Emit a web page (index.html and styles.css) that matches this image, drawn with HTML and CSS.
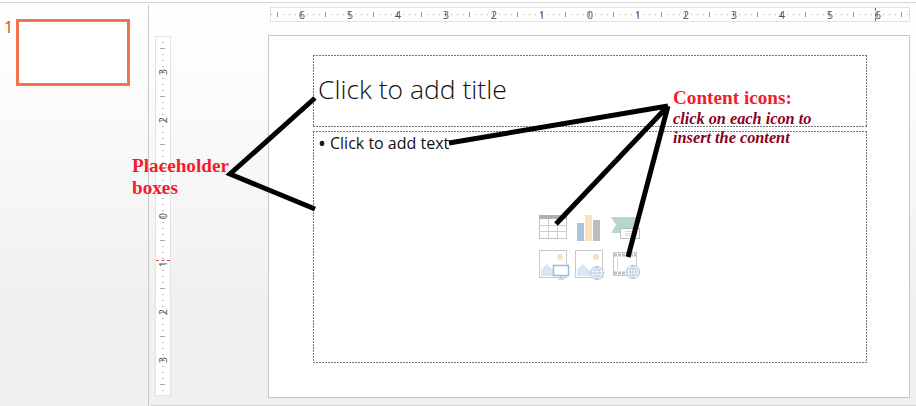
FILE: index.html
```html
<!DOCTYPE html>
<html lang="en">
<head>
    <meta charset="UTF-8">
    <title>Placeholder boxes</title>
    <link rel="stylesheet" href="styles.css">
</head>
<body>
    <div class="window">
        <div class="sidebar">
            <span class="slide-number">1</span>
            <div class="thumbnail"></div>
        </div>
        <div class="workspace">
            <div class="ruler-h">
                <span>6</span><span>5</span><span>4</span><span>3</span><span>2</span><span>1</span><span>0</span>
                <span>1</span><span>2</span><span>3</span><span>4</span><span>5</span><span>6</span>
                <i class="cursor-h"></i>
            </div>
            <div class="stage">
                <div class="ruler-v">
                    <span>3</span><span>2</span><span>1</span><span>0</span><span>1</span><span>2</span><span>3</span>
                    <i class="cursor-v"></i>
                </div>
                <div class="slide">
                    <div class="placeholder title-box">Click to add title</div>
                    <div class="placeholder content-box">
                        <p class="bullet"><span class="dot">&bull;</span>Click to add text</p>
                        <div class="icons">
                            <svg class="icon" viewBox="0 0 30 30">
                                <rect x="0.5" y="1.5" width="27" height="23" fill="#fff" stroke="#c4c4c4"/>
                                <rect x="0" y="1" width="28" height="4" fill="#b0b0b0"/>
                                <path d="M0 11.5H28M0 17.5H28M9.5 5V24M18.5 5V24" stroke="#cfcfcf" fill="none"/>
                            </svg>
                            <svg class="icon" viewBox="0 0 30 30">
                                <rect x="2" y="9" width="7" height="18" fill="#a9c2dd"/>
                                <rect x="10" y="1" width="7" height="26" fill="#f6e2bd"/>
                                <rect x="18" y="6" width="7" height="21" fill="#bdbdbd"/>
                            </svg>
                            <svg class="icon" viewBox="0 0 30 30">
                                <path d="M0 3H25L28 9L25 14H9V19H0L5 11Z" fill="#b9d6cc"/>
                                <rect x="9.5" y="14.5" width="19" height="10" fill="#fff" stroke="#bcbcbc"/>
                                <path d="M14 17.5H25M14 19.5H25M14 21.5H25" stroke="#d8d8d8" fill="none"/>
                            </svg>
                            <svg class="icon" viewBox="0 0 30 30">
                                <rect x="0.5" y="0.5" width="27" height="27" fill="#fff" stroke="#c8c8c8"/>
                                <circle cx="21" cy="7" r="3" fill="#f8dfc0"/>
                                <path d="M2 26V20L8 14L14 20V26Z" fill="#dbe4f2"/>
                                <rect x="14.5" y="15.5" width="15" height="10" fill="#fff" stroke="#9db9dc" stroke-width="1.5"/>
                                <path d="M22 26V28M19 29H25" stroke="#9db9dc" fill="none"/>
                            </svg>
                            <svg class="icon" viewBox="0 0 30 30">
                                <rect x="0.5" y="0.5" width="27" height="27" fill="#fff" stroke="#c8c8c8"/>
                                <circle cx="21" cy="7" r="3" fill="#f8dfc0"/>
                                <path d="M2 26V20L8 14L15 21V26Z" fill="#dbe4f2"/>
                                <circle cx="22" cy="23" r="6.5" fill="#fff" stroke="#a9c2e2"/>
                                <path d="M15.5 23H28.5M16.5 20H27.5M16.5 26H27.5M22 16.5V29.5M22 16.5C18 20 18 26 22 29.5M22 16.5C26 20 26 26 22 29.5" stroke="#a9c2e2" stroke-width="0.8" fill="none"/>
                            </svg>
                            <svg class="icon" viewBox="0 0 30 30">
                                <rect x="2.5" y="2.5" width="23" height="23" fill="#fff" stroke="#c8c8c8"/>
                                <path d="M3 5H25M3 23H15" stroke="#c0c0c0" stroke-width="3" stroke-dasharray="3 1" fill="none"/>
                                <path d="M6.5 7V21" stroke="#dcdcdc" fill="none"/>
                                <circle cx="22" cy="22" r="6.5" fill="#fff" stroke="#a9c2e2"/>
                                <path d="M15.5 22H28.5M16.5 19H27.5M16.5 25H27.5M22 15.5V28.5M22 15.5C18 19 18 25 22 28.5M22 15.5C26 19 26 25 22 28.5" stroke="#a9c2e2" stroke-width="0.8" fill="none"/>
                            </svg>
                        </div>
                    </div>
                </div>
            </div>
        </div>
    </div>

    <!-- annotations drawn on top of the slide -->
    <svg class="arrows" viewBox="0 0 916 406">
        <polyline points="315,98 230,174 315,209" fill="none" stroke="#000" stroke-width="5"/>
        <path d="M449 143L668 106M556 224L668 106M628 257L668 106" fill="none" stroke="#000" stroke-width="5"/>
    </svg>
    <div class="note note-left">Placeholder<br>boxes</div>
    <div class="note note-right">
        Content icons:
        <em>click on each icon to<br>insert the content</em>
    </div>
</body>
</html>
```

FILE: styles.css
```css
html, body {
    height: 100%;
    margin: 0;
    padding: 0;
    overflow: hidden;
}
body {
    position: relative;
    font-family: "Open Sans", sans-serif;
    color: #222;
    background-color: #fff;
}
.window {
    display: flex;
    height: 403px;
    margin-top: 2px;
    border-top: 1px solid #d6d6d6;
    background-image: linear-gradient(180deg, #fff 0, #fcfcfc 80px, #f0f0f0 300px);
}
.sidebar {
    display: flex;
    flex: none;
    align-items: flex-start;
    box-sizing: border-box;
    width: 149px;
    margin-top: 2px;
    padding-top: 14px;
    padding-left: 4px;
    border-right: 1px solid #c8c8c8;
}
.slide-number {
    width: 12px;
    font-size: 16px;
    line-height: 17px;
    color: #d2492a;
}
.thumbnail {
    width: 108px;
    height: 61px;
    border: 3px solid #f0744f;
    background-color: #fff;
}
.workspace {
    flex: 1;
    min-width: 0;
    margin-left: 2px;
    padding-top: 4px;
    border-bottom: 1px solid #d6d6d6;
}
.ruler-h {
    position: relative;
    display: flex;
    justify-content: center;
    width: 638px;
    height: 13px;
    margin-left: 119px;
    border: 1px solid #e2e2e2;
    background-color: #fff;
    background-image:
        repeating-linear-gradient(90deg, transparent 0 6px, #999 6px 7px, transparent 7px 24px),
        repeating-linear-gradient(90deg, #aaa 0 1px, transparent 1px 6px);
    background-size: 100% 5px, 100% 1px;
    background-position: 0 4px, 0 6px;
    background-repeat: no-repeat;
}
.ruler-h span {
    flex: none;
    width: 48px;
    font-size: 11px;
    line-height: 13px;
    text-align: center;
    color: #555;
}
.cursor-h {
    position: absolute;
    top: 0;
    left: 604px;
    height: 13px;
    border-left: 1px dashed #d2492a;
}
.stage {
    display: flex;
    align-items: flex-start;
    padding-top: 14px;
    padding-left: 4px;
}
.ruler-v {
    position: relative;
    display: flex;
    flex: none;
    flex-direction: column;
    width: 14px;
    height: 347px;
    padding-top: 11px;
    border: 1px solid #e2e2e2;
    background-color: #fff;
    background-image:
        repeating-linear-gradient(180deg, transparent 0 11px, #aaa 11px 12px, transparent 12px 24px),
        repeating-linear-gradient(180deg, transparent 0 5px, #bbb 5px 6px);
    background-size: 5px 100%, 2px 100%;
    background-position: 4px 0, 6px 0;
    background-repeat: no-repeat;
}
.ruler-v span {
    flex: none;
    height: 48px;
    font-size: 11px;
    line-height: 48px;
    text-align: center;
    color: #555;
    transform: rotate(-90deg);
}
.cursor-v {
    position: absolute;
    top: 223px;
    left: 0;
    width: 14px;
    border-top: 1px dashed #d2492a;
}
.slide {
    display: flex;
    flex: none;
    flex-direction: column;
    gap: 4px;
    box-sizing: border-box;
    width: 642px;
    height: 363px;
    margin-left: 97px;
    margin-top: -1px;
    padding: 19px 42px 0 44px;
    border: 1px solid #c6c6c6;
    background-color: #fff;
}
/* 2 on 1 off dashes, the browser's own dashed border is too sparse */
.placeholder {
    box-sizing: border-box;
    background-image:
        repeating-linear-gradient(90deg, #777 0 2px, transparent 2px 3px),
        repeating-linear-gradient(90deg, #777 0 2px, transparent 2px 3px),
        repeating-linear-gradient(180deg, #777 0 2px, transparent 2px 3px),
        repeating-linear-gradient(180deg, #777 0 2px, transparent 2px 3px);
    background-size: 100% 1px, 100% 1px, 1px 100%, 1px 100%;
    background-position: 0 0, 0 100%, 0 0, 100% 0;
    background-repeat: no-repeat;
}
.title-box {
    height: 72px;
    padding-left: 5px;
    font-size: 26.5px;
    font-weight: 300;
    line-height: 68px;
    color: #111;
}
.content-box {
    display: grid;
    height: 232px;
}
.bullet, .icons {
    grid-area: 1 / 1;
}
.bullet {
    margin: 0;
    padding: 1px 0 0 5px;
    font-size: 16px;
    line-height: 22px;
    color: #111;
}
.dot {
    display: inline-block;
    width: 12px;
    font-size: 21px;
    line-height: 0;
    vertical-align: -2px;
}
.icons {
    display: grid;
    grid-template-columns: repeat(3, 30px);
    grid-template-rows: repeat(2, 30px);
    gap: 6px;
    place-self: center;
}
.icon {
    display: block;
    width: 30px;
    height: 30px;
    overflow: visible;
}
.arrows {
    position: absolute;
    top: 0;
    left: 0;
    width: 916px;
    height: 406px;
}
.note {
    position: absolute;
    font-family: "Liberation Serif", serif;
    font-weight: bold;
    font-size: 19.2px;
    line-height: 22px;
    color: #f21c2c;
}
.note-left {
    top: 155px;
    left: 132px;
}
.note-right {
    top: 87px;
    left: 673px;
}
.note-right em {
    display: block;
    font-size: 16.3px;
    line-height: 19px;
    color: #8b0020;
}
```
